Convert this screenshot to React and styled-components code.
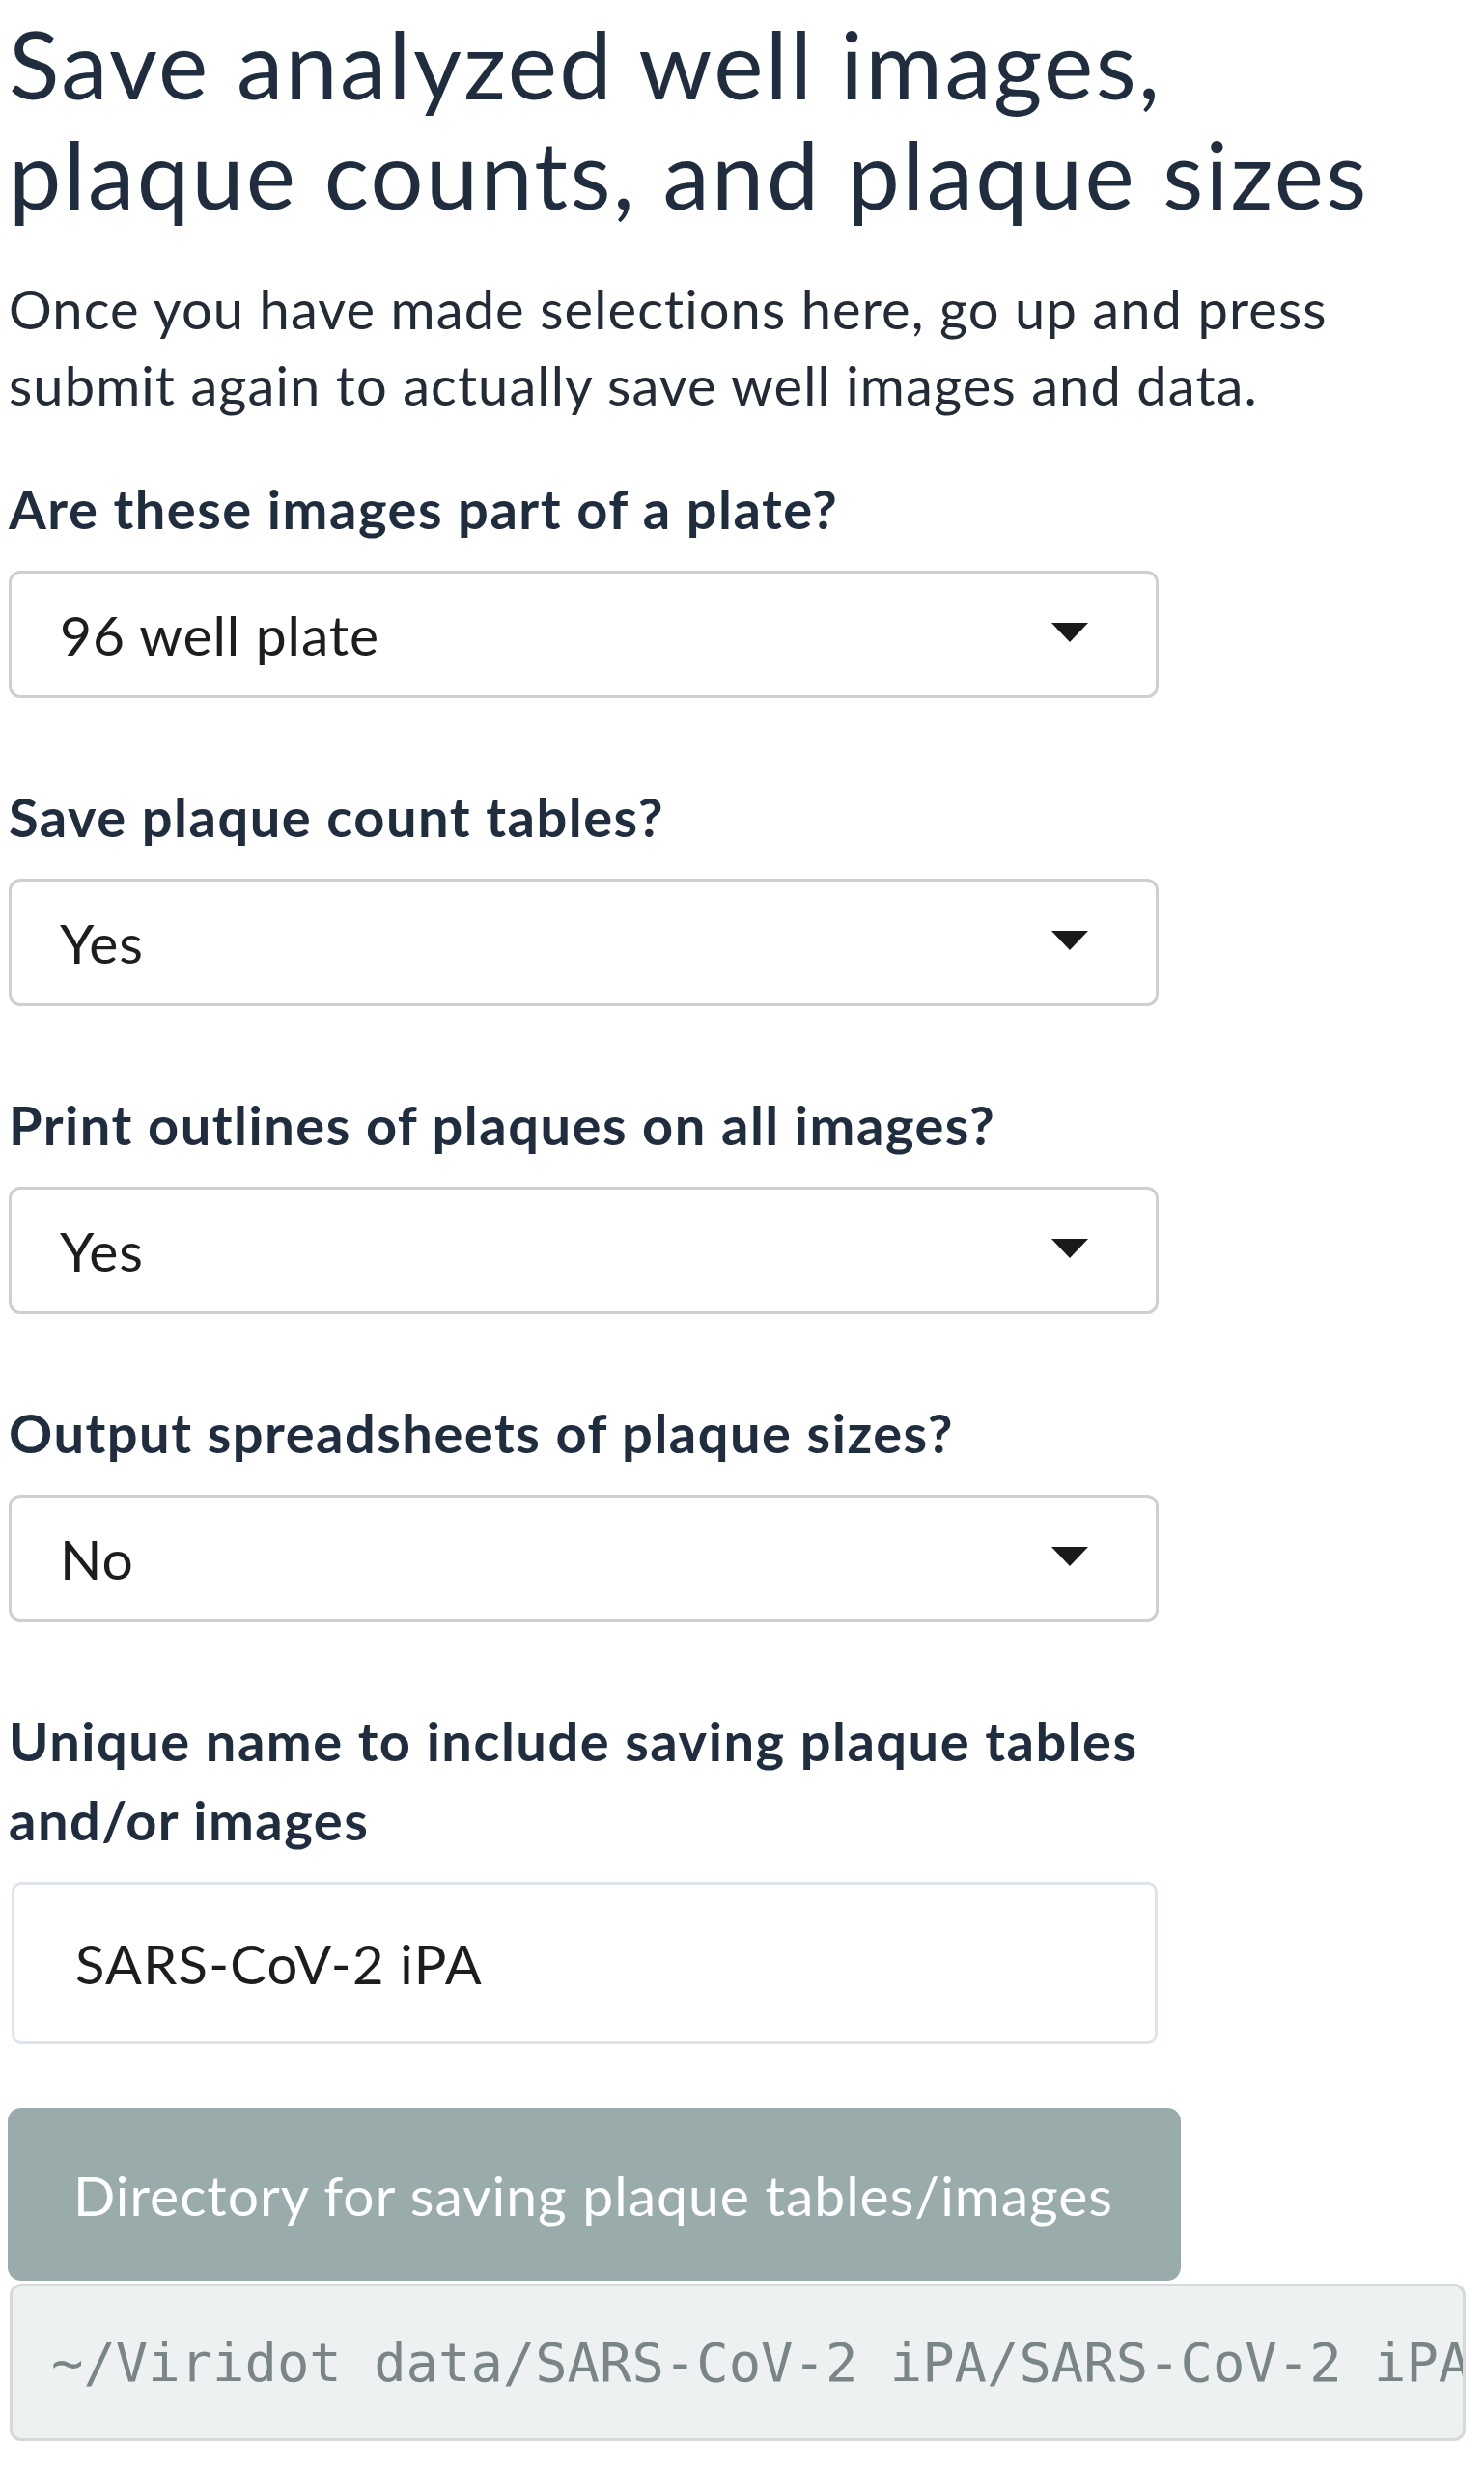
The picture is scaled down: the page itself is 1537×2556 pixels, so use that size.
import React from "react";
import styled, { createGlobalStyle } from "styled-components";

const GlobalStyle = createGlobalStyle`
  html, body {
    margin: 0;
    padding: 0;
    background: #ffffff;
  }
  body {
    font-family: Lato, "Open Sans", sans-serif;
    color: #2c3e50;
  }
`;

const Page = styled.div`
  width: 1537px;
  padding: 9px 0 0 9px;
  box-sizing: border-box;
  overflow: hidden;
`;

const Title = styled.h3`
  margin: 0;
  font-size: 97px;
  line-height: 114px;
  font-weight: 400;
  letter-spacing: 2.4px;
  color: #1f2d3f;
`;

const Intro = styled.p`
  margin: 43px 0 0;
  font-size: 56px;
  line-height: 79px;
  letter-spacing: 1.1px;
  color: #222b36;
  width: 1440px;
`;

const Group = styled.div`
  display: flex;
  flex-direction: column;
  margin-top: ${(p) => p.$top || 82}px;
`;

const Label = styled.label`
  font-size: 56px;
  line-height: 82px;
  font-weight: 700;
  letter-spacing: 1.5px;
  color: #1f2d3f;
  margin-bottom: 23px;
  width: 1220px;
`;

const SelectBox = styled.div`
  width: 1191px;
  height: 132px;
  box-sizing: border-box;
  border: 3px solid #cfcfcf;
  border-radius: 12px;
  display: flex;
  align-items: center;
  justify-content: space-between;
  padding: 0 70px 0 50px;
  font-size: 57px;
  letter-spacing: 0.9px;
  color: #1d1d1d;
  background: #fff;
`;

const Caret = styled.span`
  width: 0;
  height: 0;
  border-left: 19px solid transparent;
  border-right: 19px solid transparent;
  border-top: 20px solid #1a1a1a;
  margin-top: -4px;
`;

const TextInput = styled.div`
  width: 1187px;
  height: 168px;
  box-sizing: border-box;
  margin-left: 3px;
  border: 3px solid #dfe4ea;
  border-radius: 10px;
  display: flex;
  align-items: center;
  padding: 0 0 0 63px;
  font-size: 56px;
  letter-spacing: 1.3px;
  color: #1d1d1d;
`;

const DirButton = styled.button`
  margin-top: 66px;
  width: 1215px;
  height: 179px;
  margin-left: -1px;
  border: none;
  border-radius: 14px;
  background: #9aabab;
  color: #ffffff;
  font-family: Lato, "Open Sans", sans-serif;
  font-size: 57px;
  letter-spacing: 1px;
  text-align: left;
  padding: 0 0 0 68px;
  cursor: pointer;
`;

const PathBox = styled.pre`
  margin: 3px 0 0 1px;
  width: 1508px;
  height: 163px;
  box-sizing: border-box;
  border: 3px solid #d6d9da;
  border-radius: 12px;
  background: #eef1f2;
  color: #7a8686;
  font-family: "DejaVu Sans Mono", "Liberation Mono", monospace;
  font-size: 55.5px;
  line-height: 163px;
  padding: 0 0 0 40px;
  overflow: hidden;
  white-space: nowrap;
  display: flex;
  align-items: center;
`;

const selects = [
  { label: "Are these images part of a plate?", value: "96 well plate" },
  { label: "Save plaque count tables?", value: "Yes" },
  { label: "Print outlines of plaques on all images?", value: "Yes" },
  { label: "Output spreadsheets of plaque sizes?", value: "No" },
];

export default function App() {
  return (
    <Page>
      <GlobalStyle />
      <Title>
        Save analyzed well images,
        <br />
        plaque counts, and plaque sizes
      </Title>
      <Intro>
        Once you have made selections here, go up and press
        <br />
        submit again to actually save well images and data.
      </Intro>
      {selects.map((s, i) => (
        <Group key={s.label} $top={i === 0 ? 48 : 82}>
          <Label>{s.label}</Label>
          <SelectBox>
            <span>{s.value}</span>
            <Caret />
          </SelectBox>
        </Group>
      ))}
      <Group>
        <Label>
          Unique name to include saving plaque tables
          <br />
          and/or images
        </Label>
        <TextInput>SARS-CoV-2 iPA</TextInput>
      </Group>
      <DirButton>Directory for saving plaque tables/images</DirButton>
      <PathBox>~/Viridot data/SARS-CoV-2 iPA/SARS-CoV-2 iPA</PathBox>
    </Page>
  );
}
